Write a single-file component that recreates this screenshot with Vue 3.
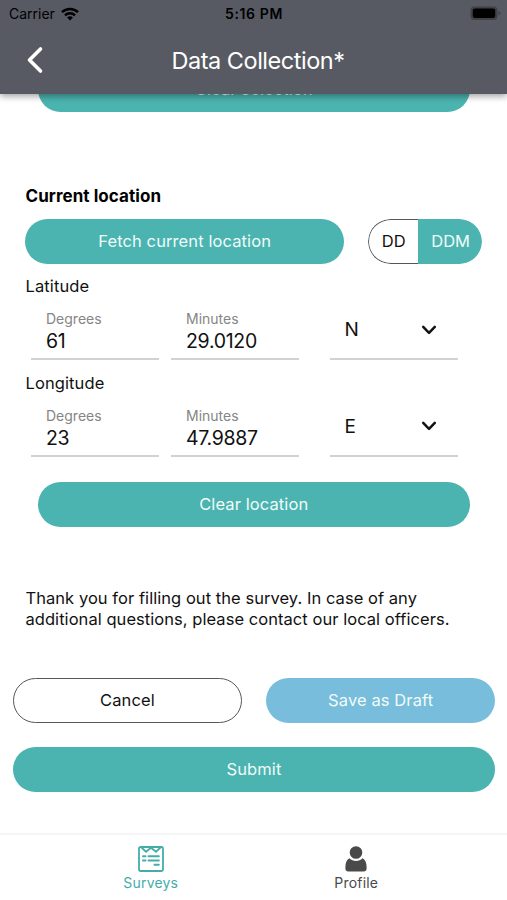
<script setup>
    import { ref } from "vue"
    const format = ref("DDM")
    const coordinates = ref([
        { name: "Latitude", degrees: "61", minutes: "29.0120", direction: "N" },
        { name: "Longitude", degrees: "23", minutes: "47.9887", direction: "E" },
    ])
</script>

<template>
    <div class="screen">
        <header class="header">
            <div class="status">
                <div class="carrier">
                    <span>Carrier</span>
                    <svg width="18" height="14" viewBox="0 0 18 14" fill="none" stroke="#000" stroke-width="2.5">
                        <path d="M1 5.2a11.4 11.4 0 0 1 16 0" />
                        <path d="M4 8.4a7.1 7.1 0 0 1 10 0" />
                        <path d="M9 13.6 6.1 10.6a4.1 4.1 0 0 1 5.8 0z" fill="#000" stroke="none" />
                    </svg>
                </div>
                <span class="time">5:16 PM</span>
                <svg class="battery" width="31" height="15" viewBox="0 0 31 15">
                    <rect x="0.5" y="0.5" width="27" height="13.5" rx="4" fill="#3f4146" />
                    <rect x="2.8" y="2.6" width="22.4" height="9.4" rx="2" fill="#000" />
                    <path d="M28.6 5a2.4 2.4 0 0 1 0 4.6z" fill="#3f4146" />
                </svg>
            </div>
            <div class="titlebar">
                <svg class="back" width="18" height="28" viewBox="0 0 18 28" fill="none" stroke="#fff" stroke-width="3.6"
                    stroke-linecap="round" stroke-linejoin="round">
                    <path d="M14.5 3 3.5 14l11 11" />
                </svg>
                <h1>Data Collection*</h1>
            </div>
        </header>

        <main class="content">
            <button class="btn clear">Clear selection</button>

            <section class="location">
                <h2>Current location</h2>
                <div class="fetchRow">
                    <button class="btn fetch">Fetch current location</button>
                    <div class="toggle">
                        <button :class="{ active: format === 'DD' }" @click="format = 'DD'">DD</button>
                        <button :class="{ active: format === 'DDM' }" @click="format = 'DDM'">DDM</button>
                    </div>
                </div>
                <div class="coordinate" v-for="item in coordinates" :key="item.name">
                    <div class="name">{{ item.name }}</div>
                    <div class="fields">
                        <div class="field">
                            <span class="label">Degrees</span>
                            <span class="value">{{ item.degrees }}</span>
                        </div>
                        <div class="field">
                            <span class="label">Minutes</span>
                            <span class="value">{{ item.minutes }}</span>
                        </div>
                        <div class="field select">
                            <span class="direction">{{ item.direction }}</span>
                            <svg width="16" height="12" viewBox="0 0 16 12" fill="none" stroke="#111" stroke-width="2.5"
                                stroke-linecap="round" stroke-linejoin="round">
                                <path d="M2.2 2.8 8 8.8l5.8-6" />
                            </svg>
                        </div>
                    </div>
                </div>
            </section>
            <button class="btn clear">Clear location</button>

            <p class="thanks">Thank you for filling out the survey. In case of any<br>additional questions, please contact our local officers.</p>

            <div class="actions">
                <button class="btn cancel">Cancel</button>
                <button class="btn draft">Save as Draft</button>
                <button class="btn submit">Submit</button>
            </div>
        </main>

        <nav class="tabs">
            <div class="tab active">
                <svg width="26" height="26" viewBox="0 0 26 26" fill="none" stroke="currentColor" stroke-width="1.8"
                    stroke-linecap="round" stroke-linejoin="round">
                    <rect x="1" y="1" width="24" height="24" rx="1.5" />
                    <path d="M3.5 1.5 8 5.8 13 1.8 18 5.8 22.5 1.5" />
                    <path d="M5 10.2h2.5M10.5 10.2h10.3M5 14.5h2.5M10.5 14.5h10.3M16.5 18.8h4.3" stroke-width="2" />
                </svg>
                <span>Surveys</span>
            </div>
            <div class="tab">
                <svg width="26" height="26" viewBox="0 0 26 26" fill="currentColor">
                    <circle cx="13" cy="6.5" r="6.3" />
                    <path d="M6.5 12.3C3.8 13.6 2.4 17 2.4 21v1.5c0 2 1.1 3 3 3h15.2c1.9 0 3-1 3-3V21c0-4-1.4-7.4-4.1-8.7-1.7 1.8-4 2.7-6.5 2.7s-4.8-.9-6.5-2.7z" />
                </svg>
                <span>Profile</span>
            </div>
        </nav>
    </div>
</template>

<style>
    body {
        margin: 0;
        background-color: #fff;
    }
</style>

<style scoped>
    .screen {
        width: 507px;
        height: 900px;
        display: flex;
        flex-direction: column;
        overflow: hidden;
        background-color: #fff;
        color: #111;
        font-family: Inter, "Liberation Sans", sans-serif;
    }

    .screen * {
        box-sizing: border-box;
    }

    button {
        font-family: inherit;
        cursor: pointer;
    }

    svg {
        display: block;
        flex: none;
    }

    .header {
        position: relative;
        z-index: 1;
        flex: none;
        height: 94px;
        background-color: #575a63;
        box-shadow: 0 2px 7px rgba(0, 0, 0, 0.4);
    }

    .status {
        display: grid;
        grid-template-columns: 1fr auto 1fr;
        align-items: center;
        height: 27px;
        padding: 0 6px 0 9px;
        color: #000;
        font-size: 14px;
        line-height: 27px;
    }

    .carrier {
        display: flex;
        align-items: center;
        gap: 6px;
    }

    .time {
        margin-right: 2px;
        font-weight: 600;
        letter-spacing: 0.6px;
    }

    .battery {
        justify-self: end;
    }

    .titlebar {
        display: grid;
        grid-template-columns: 60px 1fr 60px;
        align-items: center;
        height: 66px;
    }

    .back {
        margin-left: 26px;
    }

    h1 {
        margin: 0;
        padding-left: 9px;
        color: #fff;
        font-size: 23.5px;
        font-weight: 400;
        text-align: center;
        letter-spacing: -0.48px;
    }

    .content {
        display: flex;
        flex-direction: column;
        flex: 1;
        margin-top: -27px;
    }

    .btn {
        height: 45px;
        padding: 0 0 1px;
        border: none;
        border-radius: 23px;
        background-color: #4bb4b0;
        color: #f1fbfa;
        font-size: 16.5px;
        letter-spacing: 0.1px;
    }

    .clear {
        flex: none;
        width: 432.5px;
        margin-left: 37.5px;
    }

    .location {
        padding: 73px 25px 0;
        margin-bottom: 24.5px;
    }

    h2 {
        margin: 0;
        padding-left: 0.5px;
        height: 34px;
        line-height: 23px;
        color: #000;
        font-size: 17px;
        font-weight: 700;
        letter-spacing: 0.06px;
    }

    .fetchRow {
        display: flex;
        gap: 24px;
    }

    .fetch {
        width: 320px;
        padding-bottom: 2px;
    }

    .toggle {
        display: flex;
        width: 114px;
        height: 45px;
        border-radius: 23px;
        overflow: hidden;
    }

    .toggle button {
        width: 50px;
        padding: 0 0 1px;
        border: 1px solid #55575b;
        border-right: none;
        border-radius: 23px 0 0 23px;
        background-color: #fff;
        color: #111;
        font-size: 16.5px;
    }

    .toggle button:last-child {
        flex: 1;
        border-radius: 0 23px 23px 0;
    }

    .toggle button.active {
        border-color: #4bb4b0;
        background-color: #4bb4b0;
        color: #f1fbfa;
    }

    .name {
        padding: 11px 0 0 0.5px;
        height: 37px;
        font-size: 16.5px;
        line-height: 22px;
        letter-spacing: 0.1px;
    }

    .fields {
        display: flex;
        gap: 12px;
        height: 59.5px;
        padding-left: 6px;
    }

    .field {
        display: flex;
        flex-direction: column;
        width: 128px;
        height: 59px;
        padding: 8px 15px 0;
        border-bottom: 2px solid #d2d2d2;
    }

    .label {
        color: #858585;
        font-size: 14px;
        line-height: 20px;
    }

    .value {
        font-size: 19.5px;
        line-height: 25px;
        letter-spacing: -0.3px;
    }

    .select {
        flex-direction: row;
        align-items: center;
        justify-content: space-between;
        margin-left: 19px;
        padding: 0 21.5px 0 14.5px;
    }

    .direction {
        font-size: 19px;
    }

    .thanks {
        margin: 61px 0 0 25.5px;
        font-size: 16.5px;
        line-height: 21px;
        letter-spacing: 0.05px;
        white-space: nowrap;
    }

    .actions {
        display: grid;
        grid-template-columns: 1fr 1fr;
        gap: 24.5px;
        margin-top: 48px;
        padding: 0 12px 0 13px;
    }

    .cancel {
        border: 1px solid #55575b;
        background-color: #fff;
        color: #111;
    }

    .draft {
        background-color: #78bddb;
    }

    .submit {
        grid-column: span 2;
    }

    .tabs {
        display: flex;
        justify-content: center;
        flex: none;
        height: 67px;
        border-top: 2px solid #f5f5f5;
    }

    .tab {
        display: flex;
        flex-direction: column;
        align-items: center;
        width: 205.5px;
        padding-top: 11px;
        color: #4a4a4a;
        font-size: 14px;
        line-height: 21px;
        letter-spacing: 0.2px;
    }

    .tab.active {
        color: #45ada8;
    }
</style>
